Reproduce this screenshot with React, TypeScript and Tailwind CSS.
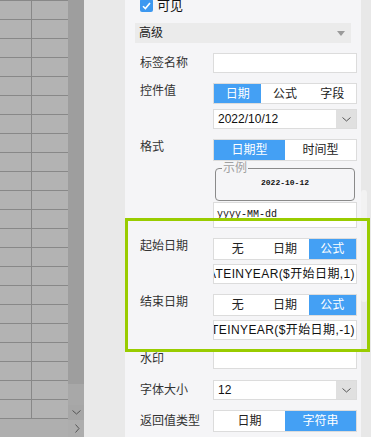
import clsx from 'clsx';

const rows = Array.from({ length: 22 });

function Seg({ items, active, h = 'h-[22px]' }: { items: string[]; active: number; h?: string }) {
  return (
    <div className={clsx('flex border border-[#dcdcdc] bg-white text-[12px]', h)}>
      {items.map((t, i) => (
        <div
          key={t}
          className={clsx(
            'flex-1 flex items-center justify-center',
            i === active ? 'bg-[#44a0f4] text-white' : 'text-[#222]'
          )}
        >
          {t}
        </div>
      ))}
    </div>
  );
}

function Input({ children, className }: any) {
  return (
    <div className={clsx('h-[20px] bg-white border border-[#dcdcdc] flex items-center text-[12px] text-[#111] overflow-hidden', className)}>
      {children}
    </div>
  );
}

function Select({ value }: { value: string }) {
  return (
    <div className="h-[20px] bg-white border border-[#dcdcdc] flex items-center text-[12px] text-[#111]">
      <span className="flex-1 pl-[4px]">{value}</span>
      <div className="w-[20px] h-full bg-[#e0e0e0] flex items-center justify-center">
        <svg width="9" height="5" viewBox="0 0 9 5" fill="none">
          <path d="M0.5 0.5 L4.5 4 L8.5 0.5" stroke="#555" strokeWidth="1" />
        </svg>
      </div>
    </div>
  );
}

function Label({ children, top }: { children: string; top?: boolean }) {
  return (
    <div
      className={clsx(
        'w-[73px] shrink-0 text-[12px] text-[#333]',
        top ? 'h-[15px] leading-[15px] mt-[1px]' : 'flex items-center'
      )}
    >
      {children}
    </div>
  );
}

// long formula scrolled to its end, so the start is clipped on the left
function Formula({ text }: { text: string }) {
  return (
    <Input className="flex-row-reverse pr-[1px] whitespace-nowrap">
      <span className="shrink-0 tracking-[0.4px]">{text}</span>
    </Input>
  );
}

function Panel() {
  return (
    <div className="w-[236px] shrink-0 bg-[#f5f5f7] flex flex-col">
      <div className="-mt-[1px] h-[13px] flex items-center pl-[15px] gap-[4px]">
        <div className="w-[13px] h-[13px] bg-[#3d98f0] rounded-[2px] flex items-center justify-center">
          <svg width="9" height="8" viewBox="0 0 9 8" fill="none">
            <path d="M1 4.2 L3.4 6.6 L8 1" stroke="white" strokeWidth="1.6" />
          </svg>
        </div>
        <span className="text-[13px] text-[#111] leading-[13px]">可见</span>
      </div>

      <div className="mt-[11px] mx-[10px] h-[20px] bg-[#ebebeb] flex items-center pl-[4px] pr-[6px] text-[12px] text-[#222]">
        <span className="flex-1">高级</span>
        <svg width="8" height="5" viewBox="0 0 8 5">
          <path d="M0 0 H8 L4 5 Z" fill="#9a9a9a" />
        </svg>
      </div>

      <div className="mt-[10px] flex pl-[15px] pr-[4px] h-[20px]">
        <Label>标签名称</Label>
        <Input className="flex-1" />
      </div>

      <div className="mt-[10px] flex pl-[15px] pr-[4px]">
        <Label top>控件值</Label>
        <div className="flex-1 min-w-0 flex flex-col">
          <Seg items={['日期', '公式', '字段']} active={0} h="h-[21px]" />
          <div className="mt-[5px]">
            <Select value="2022/10/12" />
          </div>
        </div>
      </div>

      <div className="mt-[10px] flex pl-[15px] pr-[4px]">
        <Label top>格式</Label>
        <div className="flex-1 min-w-0 flex flex-col">
          <Seg items={['日期型', '时间型']} active={0} />
          <fieldset className="mt-[1px] mx-[2px] h-[39px] border border-[#8a8a8a] rounded-[4px] flex items-center justify-center">
            <legend className="ml-[6px] px-[1px] text-[12px] leading-[12px] text-[#a0a0a0]">示例</legend>
            <span className="font-['Liberation_Mono',monospace] font-bold text-[8px] text-[#111] mt-[3px]">2022-10-12</span>
          </fieldset>
          <div className="mt-[1px] h-[26px] bg-white border border-[#dcdcdc] pl-[3px] pt-[6px] font-['Liberation_Mono',monospace] text-[10px] leading-[11px] text-[#111]">
            yyyy-MM-dd
          </div>
        </div>
      </div>

      <div className="mt-[10px] flex pl-[15px] pr-[4px]">
        <Label top>起始日期</Label>
        <div className="flex-1 min-w-0 flex flex-col">
          <Seg items={['无', '日期', '公式']} active={2} />
          <div className="mt-[4px]">
            <Formula text="=DATEINYEAR($开始日期,1)" />
          </div>
        </div>
      </div>

      <div className="mt-[10px] flex pl-[15px] pr-[4px]">
        <Label top>结束日期</Label>
        <div className="flex-1 min-w-0 flex flex-col">
          <Seg items={['无', '日期', '公式']} active={2} />
          <div className="mt-[4px]">
            <Formula text="=DATEINYEAR($开始日期,-1)" />
          </div>
        </div>
      </div>

      <div className="mt-[9px] flex pl-[15px] pr-[4px] h-[20px]">
        <Label>水印</Label>
        <Input className="flex-1" />
      </div>

      <div className="mt-[11px] flex pl-[15px] pr-[4px] h-[20px]">
        <Label>字体大小</Label>
        <div className="flex-1 min-w-0">
          <Select value="12" />
        </div>
      </div>

      <div className="mt-[10px] flex pl-[15px] pr-[4px] h-[22px]">
        <Label>返回值类型</Label>
        <div className="flex-1 min-w-0">
          <Seg items={['日期', '字符串']} active={1} />
        </div>
      </div>
    </div>
  );
}

export default function App() {
  return (
    <div className="w-[371px] h-[437px] relative flex overflow-hidden bg-[#f5f5f7] font-['Liberation_Sans','Noto_Sans_CJK_SC',sans-serif]">
      {/* sheet area, dimmed */}
      <div className="w-[68px] shrink-0 flex flex-col bg-[#b3b3b3]">
        {rows.map((_, i) => (
          <div key={i} className="h-[19px] shrink-0 border-t border-[#888] flex">
            <div className="w-[32px] border-r border-[#888]" />
            <div className="flex-1" />
          </div>
        ))}
        <div className="h-[1px] shrink-0 bg-[#888]" />
        <div className="flex-1 bg-[#afafaf]" />
      </div>

      <div className="w-[16px] shrink-0 flex flex-col bg-[#9e9e9e]">
        <div className="h-[384px]" />
        <div className="h-[21px] bg-[#a8a8a8]" />
        <div className="h-[15px] bg-[#a6a6a6] flex items-center justify-center">
          <svg width="9" height="5" viewBox="0 0 9 5" fill="none">
            <path d="M0.5 0.5 L4.5 4 L8.5 0.5" stroke="#555" strokeWidth="1" />
          </svg>
        </div>
        <div className="flex-1 bg-[#adadad] flex items-center justify-center pl-[2px]">
          <svg width="5" height="9" viewBox="0 0 5 9" fill="none">
            <path d="M0.5 0.5 L4 4.5 L0.5 8.5" stroke="#555" strokeWidth="1" />
          </svg>
        </div>
      </div>

      <div className="w-[41px] shrink-0 bg-[#e9e9e9]" />

      <Panel />

      <div className="w-[10px] shrink-0 bg-[#e8e8e8] flex flex-col">
        <div className="h-[190px]" />
        <div className="w-[6px] h-[112px] bg-[#f2f2f2] rounded-[3px]" />
      </div>

      {/* highlight frame */}
      <div className="absolute left-[125px] top-[218px] w-[245px] h-[134px] border-[3px] border-[#99cc00] pointer-events-none" />
    </div>
  );
}
